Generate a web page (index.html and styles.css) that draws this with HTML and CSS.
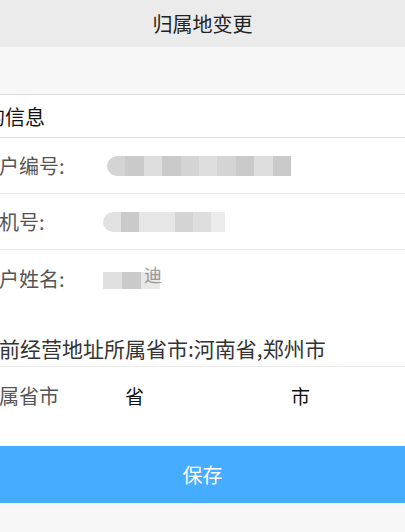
FILE: index.html
```html
<!DOCTYPE html>
<html lang="zh-CN">
<head>
    <meta charset="UTF-8">
    <meta name="viewport" content="width=device-width, initial-scale=1.0">
    <title>归属地变更</title>
    <link rel="stylesheet" href="styles.css">
</head>
<body>
    <header class="top-bar">归属地变更</header>

    <div class="spacer"></div>

    <section class="info">
        <h2 class="info-title">客户的信息</h2>

        <div class="info-row">
            <span class="label">客户编号:</span>
            <span class="masked masked-id">
                <i></i><i></i><i></i><i></i><i></i><i></i><i></i><i></i><i></i><i></i>
            </span>
        </div>
        <div class="info-row">
            <span class="label">手机号:</span>
            <span class="masked masked-phone">
                <i></i><i></i><i></i><i></i><i></i><i></i><i></i>
            </span>
        </div>
        <div class="info-row no-border">
            <span class="label">客户姓名:</span>
            <span class="masked masked-name">
                <i></i><i></i><i></i><b>迪</b>
            </span>
        </div>
    </section>

    <div class="address">当前经营地址所属省市:河南省,郑州市</div>

    <div class="region-row">
        <span class="label">所属省市</span>
        <span class="pick pick-province">省</span>
        <span class="pick pick-city">市</span>
    </div>

    <div class="actions">
        <button class="save-button">保存</button>
    </div>
</body>
</html>
```

FILE: styles.css
```css
* {
    margin: 0;
    padding: 0;
    box-sizing: border-box;
}

body {
    font-family: "Noto Sans CJK SC", "Noto Sans", sans-serif;
    background: #f7f7f7;
    color: #333;
    overflow: hidden;
}

.top-bar {
    height: 47px;
    line-height: 47px;
    background: #ebebeb;
    text-align: center;
    font-size: 20px;
    color: #222;
}

.spacer {
    height: 48px;
    background: #f7f7f7;
    border-bottom: 1px solid #dcdcdc;
}

.info {
    background: #fff;
}

.info-title {
    height: 43px;
    line-height: 44px;
    margin-left: -55px;
    font-size: 20px;
    font-weight: normal;
    color: #111;
    border-bottom: 1px solid #dcdcdc;
}

.info-row {
    display: flex;
    align-items: center;
    height: 56px;
    margin-left: -21px;
    border-bottom: 1px solid #ececec;
}

.info-row.no-border {
    border-bottom: none;
}

.label {
    width: 124px;
    font-size: 20px;
    color: #555;
    flex-shrink: 0;
}

.masked {
    display: flex;
    height: 20px;
}

.masked i {
    display: block;
    width: 18px;
    background: #d4d4d4;
}

.masked i:nth-child(2n) {
    background: #cacaca;
}

.masked i:nth-child(3n) {
    background: #dedede;
}

.masked-id {
    margin-left: 4px;
}

.masked-id i {
    width: 18.4px;
}

.masked-id i:first-child {
    border-radius: 10px 0 0 10px;
}

.masked-phone i:first-child {
    border-radius: 10px 0 0 10px;
    background: #e2e2e2;
}

.masked-phone i:nth-child(3),
.masked-phone i:nth-child(4) {
    background: #e6e6e6;
}

.masked-phone i:last-child {
    width: 14px;
    background: #ececec;
}

.masked-name {
    height: 17px;
    margin-top: 4px;
}

.masked-name i {
    width: 19px;
    background: #e0e0e0;
}

.masked-name i:nth-child(3) {
    background: #e8e8e8;
}

.masked-name b {
    font-weight: normal;
    font-size: 18px;
    line-height: 17px;
    color: #666;
    margin-left: -16px;
    margin-top: -6px;
    opacity: 0.6;
}

.address {
    background: #fff;
    margin-left: -22px;
    padding: 30px 0 6px;
    font-size: 21px;
    line-height: 24px;
    color: #333;
    border-bottom: 1px solid #ececec;
}

.region-row {
    display: flex;
    align-items: center;
    height: 56px;
    margin-left: -21px;
    background: #fff;
}

.pick {
    font-size: 19px;
    color: #111;
}

.pick-province {
    width: 188px;
    padding-left: 22px;
}

.actions {
    background: #fff;
    padding-top: 23px;
}

.save-button {
    display: block;
    width: 100%;
    height: 57px;
    border: none;
    background: #45acff;
    color: #fff;
    font-family: inherit;
    font-size: 20px;
    cursor: pointer;
}
```
